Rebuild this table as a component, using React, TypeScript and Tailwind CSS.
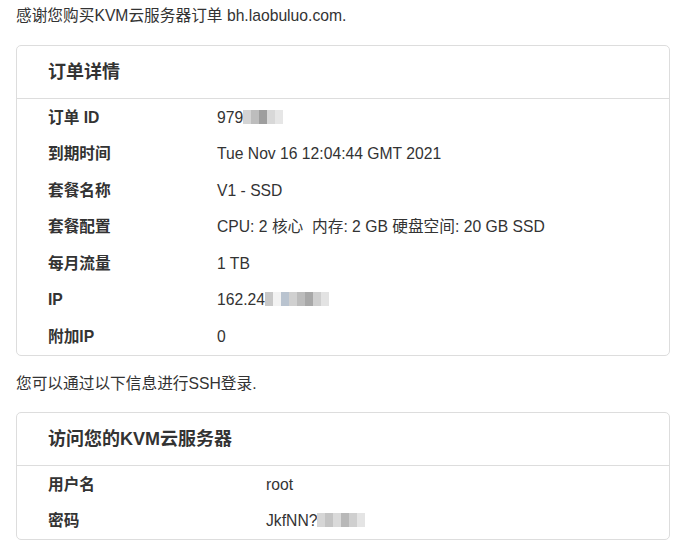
import React from "react";

const FONT = "font-['Liberation_Sans','Noto_Sans_CJK_SC',sans-serif]";

// pixelated (mosaic) blocks standing in for masked values
const Mosaic = ({ cells }: { cells: string[] }) => (
  <span className="inline-flex h-[14px] align-[-1px] blur-[0.6px]">
    {cells.map((c, i) => (
      <span key={i} className="w-[8px] h-full" style={{ backgroundColor: c }} />
    ))}
  </span>
);

type Row = { label: string; value: React.ReactNode };

const orderRows: Row[] = [
  {
    label: "订单 ID",
    value: (
      <>
        979
        <Mosaic cells={["#d4d4d4", "#bdbdbd", "#9e9e9e", "#d8d8d8", "#e6e6e6"]} />
      </>
    ),
  },
  { label: "到期时间", value: "Tue Nov 16 12:04:44 GMT 2021" },
  { label: "套餐名称", value: "V1 - SSD" },
  { label: "套餐配置", value: "CPU: 2 核心  内存: 2 GB 硬盘空间: 20 GB SSD" },
  { label: "每月流量", value: "1 TB" },
  {
    label: "IP",
    value: (
      <>
        162.24
        <Mosaic cells={["#c8c8c8", "#f2f2f2", "#b9c3cf", "#d0d0d0", "#bcbcbc", "#a8a8a8", "#cfcfcf", "#e3e3e3"]} />
      </>
    ),
  },
  { label: "附加IP", value: "0" },
];

const loginRows: Row[] = [
  { label: "用户名", value: "root" },
  {
    label: "密码",
    value: (
      <>
        JkfNN?
        <Mosaic cells={["#d6d6d6", "#c4c4c4", "#dadada", "#b8b8b8", "#cfcfcf", "#e4e4e4"]} />
      </>
    ),
  },
];

const Card = ({ title, rows, labelWidth }: { title: string; rows: Row[]; labelWidth: string }) => (
  <div className="border border-[#dddddd] rounded-[5px] bg-white">
    <div className="h-[53px] flex items-center px-[31px] border-b border-[#dddddd]">
      <h3 className="text-[18px] font-bold text-[#333]">{title}</h3>
    </div>
    <div>
      {rows.map((r) => (
        <div key={r.label} className="flex items-center h-[36.6px] px-[31px]">
          <div className={`${labelWidth} font-bold`}>{r.label}</div>
          <div className="whitespace-pre">{r.value}</div>
        </div>
      ))}
    </div>
  </div>
);

export default function App() {
  return (
    <div className={`${FONT} text-[15.7px] text-[#333] bg-white min-h-[549px] pl-4 pr-[22px] pt-[6px]`}>
      <p className="leading-[20px]">感谢您购买KVM云服务器订单 bh.laobuluo.com.</p>
      <div className="mt-[18px] pt-px">
        <Card title="订单详情" rows={orderRows} labelWidth="w-[169px]" />
      </div>
      <p className="mt-[18px] leading-[20px]">您可以通过以下信息进行SSH登录.</p>
      <div className="mt-[18px]">
        <Card title="访问您的KVM云服务器" rows={loginRows} labelWidth="w-[218px]" />
      </div>
    </div>
  );
}
